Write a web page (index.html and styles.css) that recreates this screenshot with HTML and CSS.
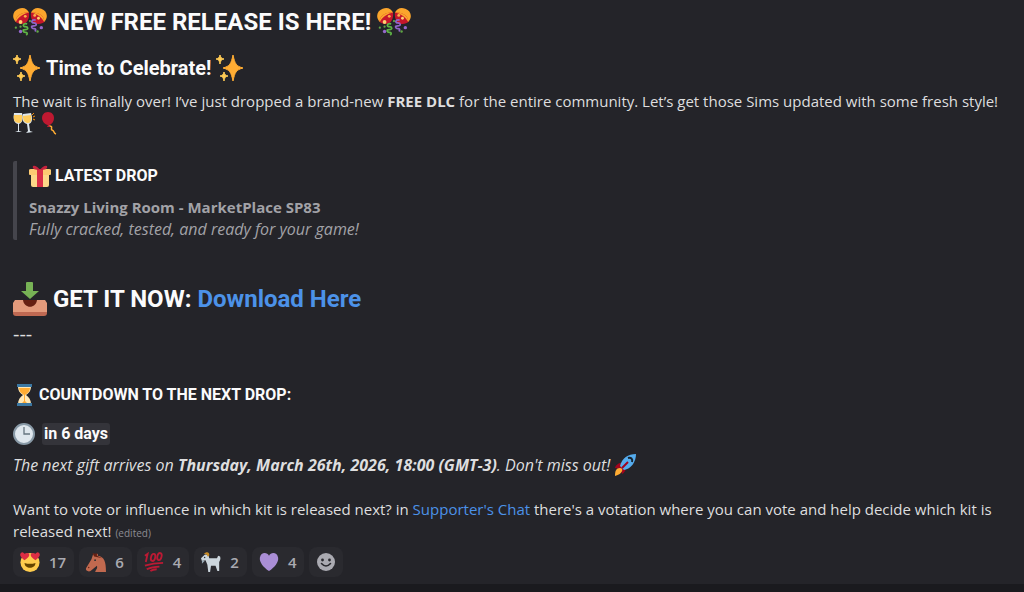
FILE: index.html
```
<!DOCTYPE html>
<html lang="en">
<head>
<meta charset="utf-8">
<meta name="viewport" content="width=device-width, initial-scale=1">
<title>New free release</title>
<link rel="stylesheet" href="styles.css">
</head>
<body>
<svg class="defs" aria-hidden="true">
  <symbol id="confetti" viewBox="0 0 36 30">
    <path d="M3 15C-2 10 0 3 6 1c5-2 9 0 11 4Z" fill="#fba52c"/>
    <path d="M3 15c-1-6 6-11 14-10 1 7-3 13-8 12-3 0-5-1-6-2Z" fill="#c5162b"/>
    <path d="M3 15c-1-6 6-11 14-10-5 1-11 4-14 10Z" fill="#fba52c"/>
    <circle cx="13" cy="9" r="1.5" fill="#fbb04a"/><circle cx="8" cy="15" r="2" fill="#ffd070"/>
    <path d="M33 15c5-5 3-12-3-14-5-2-9 0-11 4Z" fill="#fba52c"/>
    <path d="M33 15c1-6-6-11-14-10-1 7 3 13 8 12 3 0 5-1 6-2Z" fill="#c5162b"/>
    <path d="M33 15c1-6-6-11-14-10 5 1 11 4 14 10Z" fill="#fba52c"/>
    <circle cx="23" cy="8" r="1.5" fill="#fbb04a"/><circle cx="27" cy="11" r="1.5" fill="#ffd070"/>
    <path d="M15 17c-5-1-5 3-2 3s4 3 0 3-2 3 0 3 3 1 1 3" fill="none" stroke="#5fb545" stroke-width="1.8"/>
    <path d="M24 13c-5-1-5 3-2 3s4 3 0 3-2 3 0 3 3 1 1 3" fill="none" stroke="#9166c9" stroke-width="1.8"/>
    <circle cx="8" cy="25" r="1.8" fill="#9568cc"/><circle cx="30" cy="21" r="1.8" fill="#9568cc"/>
    <circle cx="3" cy="21" r="1.2" fill="#5fa545"/><circle cx="8" cy="20" r="1.2" fill="#5fa545"/><circle cx="18" cy="14" r="1.2" fill="#5fa545"/><circle cx="26" cy="25" r="1.3" fill="#5fa545"/>
  </symbol>
  <symbol id="sparkles" viewBox="0 0 28 28">
    <path d="M17 1c2 9 3 11 10 13-7 2-8 4-10 13-2-9-3-11-10-13 7-2 8-4 10-13Z" fill="#ffac33" stroke="#ffac33" stroke-linejoin="round"/>
    <path d="M4 1c1 3 1 3 4 4-3 1-3 1-4 5-1-4-1-4-4-5 3-1 3-1 4-4ZM8 18c1 3 1 3 4 4-3 1-3 1-4 5-1-4-1-4-4-5 3-1 3-1 4-4Z" fill="#ffcb55" stroke="#ffcb55" stroke-linejoin="round"/>
  </symbol>
</svg>
<main class="message">
  <h1><svg class="emoji-xl"><use href="#confetti"/></svg><span>NEW FREE RELEASE IS HERE!</span><svg class="emoji-xl"><use href="#confetti"/></svg></h1>
  <h2><svg class="emoji-lg"><use href="#sparkles"/></svg><span>Time to Celebrate!</span><svg class="emoji-lg"><use href="#sparkles"/></svg></h2>
  <p>The wait is finally over! I’ve just dropped a brand-new <strong>FREE DLC</strong> for the entire community. Let’s get those Sims updated with some fresh style!
    <svg class="emoji" viewBox="0 0 22 22"><path d="M1 1h8c2 6 0 10-3 11v7l3 1H2l3-1v-7C1 11 0 7 1 1Z" fill="#dce5ec"/><path d="M1 3h8c1 5-1 8-3 8-4 0-6-3-5-8Z" fill="#ffcc5c"/><path d="m10 2 8-1c2 6 1 10-2 11l1 7 3 1-7 1 2-2-1-7c-4-1-5-4-4-10Z" fill="#dce5ec"/><path d="m10 4 8-1c1 5 0 8-3 8s-5-2-5-7Z" fill="#ffcc5c"/><path d="m19 3 2-2M20 5l2-1M20 7l2 1" stroke="#f4900c"/></svg>
    <svg class="emoji" viewBox="0 0 22 22"><path d="M10 14c5 0 1 3 3 4 3 1 1 3 4 4" fill="none" stroke="#ffac33" stroke-width="1.5"/><path d="M9 0c4 0 6 3 6 6 0 4-3 7-5 7l1 2H8l1-2C6 13 3 9 3 6c0-3 2-6 6-6Z" fill="#be1931"/></svg>
  </p>
  <blockquote>
    <h3><svg class="emoji" viewBox="0 0 22 22"><path d="M2 9h18v11q0 2-2 2H4q-2 0-2-2Z" fill="#fdd888"/><path d="M0 5q0-1 2-1h18q2 0 2 1v4q0 1-1 1H1q-1 0-1-1Z" fill="#fdcb72"/><path d="M8 4h6v18H8Z" fill="#da2f47"/><path d="M11 5C6 5 3 4 4 1q3-1 7 4 4-5 7-4c1 3-2 4-7 4Z" fill="#c5233d"/></svg><span>LATEST DROP</span></h3>
    <p><strong>Snazzy Living Room - MarketPlace SP83</strong><br><em>Fully cracked, tested, and ready for your game!</em></p>
  </blockquote>
  <h1 class="download"><svg class="emoji-xl tray" viewBox="0 0 34 34"><path d="M2 18h30l2 3v9H0v-9Z" fill="#e39b7c"/><path d="M0 30h34v1q0 3-3 3H3q-3 0-3-3Z" fill="#bf6952"/><path d="M10 18h14c-1 9-13 9-14 0Z" fill="#662113"/><path d="M13 1q0-1 1-1h5q1 0 1 1v8h6l-9 8-9-8h5Z" fill="#77b255"/></svg><span>GET IT NOW: <a href="#download">Download Here</a></span></h1>
  <p class="rule">---</p>
  <h3 class="countdown"><svg class="emoji" viewBox="0 0 22 22"><path d="M5 2h13c0 5-2 7-5 9 3 2 5 5 5 9H5c0-4 2-7 5-9-3-2-5-4-5-9Z" fill="#ffe8b6"/><path d="M6 4h11c0 3-2 5-5 7v6l3 3H8l3-3v-6C8 9 6 7 6 4Z" fill="#ffac33"/><path d="M4 0h15v3H4ZM4 19h15v3H4Z" fill="#3b78a3"/></svg><span>COUNTDOWN TO THE NEXT DROP:</span></h3>
  <h3 class="when"><svg class="emoji" viewBox="0 0 22 22"><circle cx="11" cy="11" r="10" fill="#dfe7ed" stroke="#8899a6" stroke-width="2"/><path d="M11 4v7h6" fill="none" stroke="#66757f" stroke-width="1.3"/></svg><time datetime="2026-03-26T18:00-03:00">in 6 days</time></h3>
  <p class="arrival"><em>The next gift arrives on <strong>Thursday, March 26th, 2026, 18:00 (GMT-3)</strong>. Don't miss out!</em> <svg class="emoji" viewBox="0 0 22 22"><path d="M1 14c1-4 5-6 10-5l2 3c-1 4-3 7-5 8l-1-5Z" fill="#a0041e"/><path d="M1 22c0-5 1-8 5-8s3 6-5 8Z" fill="#ffac33"/><path d="M22 0c0 8-5 15-12 16l-4-4C8 4 14 0 22 0Z" fill="#55acee"/><path d="m8 14 6-6" stroke="#a0041e" stroke-width="2"/><path d="M14 4c3-1 5 1 4 4" fill="none" stroke="#17242f" stroke-width="2"/></svg></p>
  <p class="vote">Want to vote or influence in which kit is released next? in <a href="#chat">Supporter's Chat</a> there's a votation where you can vote and help decide which kit is released next! <small>(edited)</small></p>
  <div class="reactions">
    <button type="button" aria-label="Heart eyes, 17"><svg class="emoji-sm" viewBox="0 0 22 22"><circle cx="11" cy="11.5" r="10.5" fill="#ffcc4d"/><path d="M5 9C1 6-1 3 1 1q2-2 4 1 3-2 5 0c1 3-2 5-5 7ZM17 9c4-3 6-6 4-8q-2-2-4 1-3-2-5 0c-1 3 2 5 5 7Z" fill="#dd2e44"/><path d="M5 12q6 2 12 0c0 7-12 7-12 0Z" fill="#664500"/></svg><span>17</span></button>
    <button type="button" aria-label="Horse, 6"><svg class="emoji-sm" viewBox="0 0 22 22"><path d="m8 2 2 1 3-1v2c7 1 9 6 9 18H10c1-3 3-4 2-7l-7 6c-2 1-6 0-5-3L6 8Z" fill="#c1694f"/><path d="m8 3-1-2 3 1 2-1v3l6 3-9-2Z" fill="#662113"/><circle cx="10" cy="9" r="1" fill="#292f33"/><circle cx="3" cy="17" r=".8" fill="#662113"/></svg><span>6</span></button>
    <button type="button" aria-label="Hundred points, 4"><svg class="emoji-sm" viewBox="0 0 22 22"><g fill="none" stroke="#bb1a34" stroke-width="2"><path d="m1 4 3-2-2 9"/><ellipse cx="10" cy="6" rx="2.3" ry="4" transform="rotate(15 10 6)"/><ellipse cx="17" cy="5" rx="2.3" ry="4" transform="rotate(15 17 5)"/><path d="M1 15q9-3 20-3M3 19q6-3 14-3M7 21q3-2 7-2"/></g></svg><span>4</span></button>
    <button type="button" aria-label="Goat, 2"><svg class="emoji-sm" viewBox="0 0 22 22"><path d="M4 3c3-1 5 1 5 4h8c1 0 1-2 2-3l2 1c1 3 0 4-1 6v10h-2l-2-6H11l-1 7H8l-1-8-2-5-4 1-1-3Z" fill="#ccd6dd"/><path d="M3 2c3-3 7-2 6 2L7 5Q7 2 3 2Z" fill="#c88c26"/><path d="M1 9v4l3-3" fill="#99aab5"/><circle cx="4" cy="6" r=".8" fill="#292f33"/></svg><span>2</span></button>
    <button type="button" aria-label="Purple heart, 4"><svg class="emoji-sm" viewBox="0 0 22 22"><path d="M11 21C5 17 0 11 1 6c1-6 8-6 10-2 2-4 9-4 10 2 1 5-4 11-10 15Z" fill="#aa8ed6"/></svg><span>4</span></button>
    <button type="button" class="add" aria-label="Add reaction"><svg class="face" viewBox="0 0 18 18"><circle cx="9" cy="9" r="9" fill="#aaaab1"/><circle cx="5.5" cy="7" r="1.4" fill="#29292e"/><circle cx="12.5" cy="7" r="1.4" fill="#29292e"/><path d="M4.5 10.5q4.5 5 9 0" fill="none" stroke="#29292e" stroke-width="1.6" stroke-linecap="round"/></svg></button>
  </div>
</main>
<div class="edge"></div>
</body>
</html>
```
FILE: styles.css
```
* { box-sizing: border-box; }
body { margin: 0; min-height: 100vh; display: flex; flex-direction: column; background: #242429; color: #dededf; font: 15px/22px "Open Sans", sans-serif; }
.defs { position: absolute; width: 0; height: 0; }
.message { flex: 1; padding: 4px 16px 6px 13px; }
h1, h2, h3, p, blockquote { margin: 0; }
h1, h2, h3 { display: flex; align-items: center; color: #fbfbfc; font-family: Roboto, sans-serif; font-weight: 700; }
h1 { gap: 6px; font-size: 24px; line-height: 36px; }
h2 { gap: 5px; font-size: 20px; line-height: 28px; margin: 14px 0 8px; }
h3 { gap: 4px; font-size: 16px; line-height: 22px; }
svg { flex: none; overflow: visible; }
.emoji-xl { width: 34px; height: 30px; }
.tray { height: 34px; }
.emoji-lg { width: 28px; height: 28px; }
.emoji { width: 22px; height: 22px; vertical-align: top; }
.emoji-sm { width: 20px; height: 20px; }
a { color: #4c92e8; text-decoration: none; }
em { font-size: 16px; }
blockquote { margin-top: 27px; padding: 4px 0 0 12px; border-left: 4px solid #45454c; border-radius: 2px; color: #a2a2a7; }
blockquote p { margin-top: 9px; }
.download { margin-top: 41px; }
.rule { margin-top: 6px; font-size: 20px; }
.countdown { margin-top: 39px; }
.when { gap: 7px; margin-top: 17px; }
time { padding: 0 2px; border-radius: 3px; background: #34343a; }
.arrival { margin-top: 9px; }
.vote { margin-top: 22px; }
small { font-size: 10px; line-height: 12px; color: #8c8c92; }
.reactions { display: flex; gap: 5px; margin-top: 5px; }
button { display: flex; align-items: center; gap: 9px; height: 30px; padding: 0 8px 0 7px; border: 0; border-radius: 8px; background: #2a2a2f; color: #aaaab1; font: 600 15px/22px "Open Sans", sans-serif; }
.add { padding: 0 8px; }
.face { width: 18px; height: 18px; }
.edge { height: 8px; background: #1a1a1e; }
```
